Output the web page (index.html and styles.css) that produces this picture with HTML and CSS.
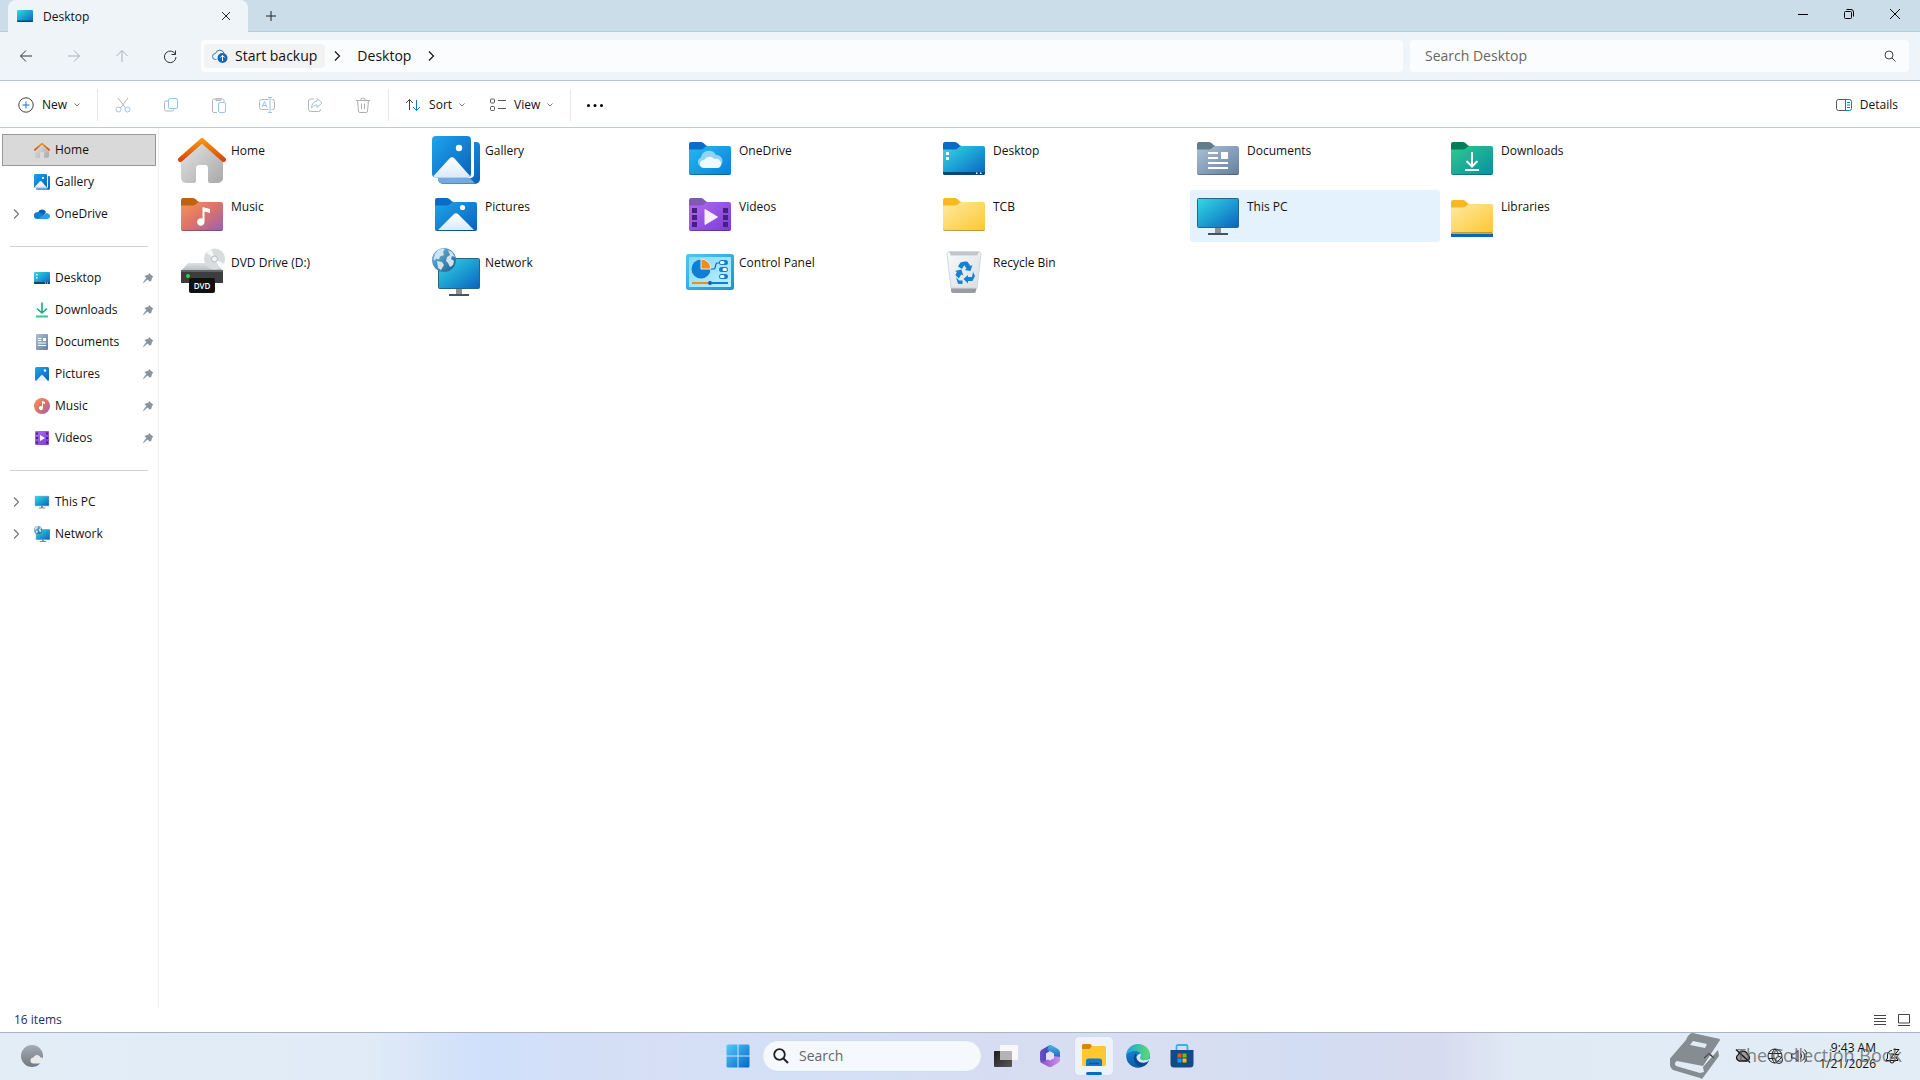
FILE: index.html
```
<!DOCTYPE html>
<html lang="en">

<head>
    <meta charset="UTF-8">
    <meta name="viewport" content="width=device-width, initial-scale=1.0">
    <title>Desktop</title>
    <link rel="stylesheet" href="styles.css">
</head>

<body>

    <svg class="sprite" aria-hidden="true">
        <defs>
            <linearGradient id="g-roof" x1="0" y1="0" x2="0" y2="1">
                <stop offset="0" stop-color="#f6920f"/><stop offset="1" stop-color="#d84a0c"/>
            </linearGradient>
            <linearGradient id="g-wall" x1="0" y1="0" x2="1" y2="1">
                <stop offset="0" stop-color="#e6e6e6"/><stop offset="1" stop-color="#a9a9a9"/>
            </linearGradient>
            <linearGradient id="g-blue" x1="0" y1="0" x2="1" y2="1">
                <stop offset="0" stop-color="#1fa5ea"/><stop offset="1" stop-color="#0a60bd"/>
            </linearGradient>
            <linearGradient id="g-sky" x1="0" y1="0" x2="1" y2="1">
                <stop offset="0" stop-color="#28b8ee"/><stop offset="1" stop-color="#0a80d8"/>
            </linearGradient>
            <linearGradient id="g-screen" x1="0" y1="0" x2="1" y2="1">
                <stop offset="0" stop-color="#37d8e4"/><stop offset="0.5" stop-color="#1c9fd3"/><stop offset="1" stop-color="#0b62bf"/>
            </linearGradient>
            <linearGradient id="g-doc" x1="0" y1="0" x2="1" y2="1">
                <stop offset="0" stop-color="#abc0d6"/><stop offset="1" stop-color="#647f9f"/>
            </linearGradient>
            <linearGradient id="g-green" x1="0" y1="0" x2="1" y2="1">
                <stop offset="0" stop-color="#2fca8c"/><stop offset="1" stop-color="#078fa5"/>
            </linearGradient>
            <linearGradient id="g-music" x1="0" y1="0" x2="1" y2="1">
                <stop offset="0" stop-color="#f79557"/><stop offset="0.5" stop-color="#dc7268"/><stop offset="1" stop-color="#9561b6"/>
            </linearGradient>
            <linearGradient id="g-video" x1="0" y1="0" x2="1" y2="1">
                <stop offset="0" stop-color="#b26af0"/><stop offset="1" stop-color="#7b3bd6"/>
            </linearGradient>
            <linearGradient id="g-yellow" x1="0" y1="0" x2="1" y2="1">
                <stop offset="0" stop-color="#ffeaa0"/><stop offset="1" stop-color="#fdc731"/>
            </linearGradient>
            <linearGradient id="g-snow" x1="0" y1="0" x2="0" y2="1">
                <stop offset="0" stop-color="#fff"/><stop offset="1" stop-color="#d9eaf9"/>
            </linearGradient>
            <linearGradient id="g-globe" x1="0" y1="0" x2="1" y2="1">
                <stop offset="0" stop-color="#6fbfe0"/><stop offset="1" stop-color="#1a5c8e"/>
            </linearGradient>
            <linearGradient id="g-panel" x1="0" y1="0" x2="1" y2="1">
                <stop offset="0" stop-color="#4fc9ee"/><stop offset="1" stop-color="#1e92d2"/>
            </linearGradient>
            <linearGradient id="g-panel-in" x1="0" y1="0" x2="1" y2="1">
                <stop offset="0" stop-color="#7fdcf8"/><stop offset="1" stop-color="#c3eefc"/>
            </linearGradient>
            <linearGradient id="g-bin" x1="0" y1="0" x2="1" y2="1">
                <stop offset="0" stop-color="#f9fafb"/><stop offset="1" stop-color="#dadde1"/>
            </linearGradient>
            <linearGradient id="g-edge-top" x1="0" y1="0" x2="1" y2="0">
                <stop offset="0" stop-color="#1aa7e0"/><stop offset="1" stop-color="#5bdd6c"/>
            </linearGradient>
            <linearGradient id="g-edge-side" x1="0" y1="0" x2="0" y2="1">
                <stop offset="0" stop-color="#1b93e0"/><stop offset="1" stop-color="#0b57a8"/>
            </linearGradient>
            <linearGradient id="g-moon" x1="0" y1="0" x2="0" y2="1">
                <stop offset="0" stop-color="#a3abb3"/><stop offset="1" stop-color="#727980"/>
            </linearGradient>
            <linearGradient id="g-drive" x1="0" y1="0" x2="0" y2="1">
                <stop offset="0" stop-color="#dfe1e3"/><stop offset="1" stop-color="#b6b9bc"/>
            </linearGradient>
            <linearGradient id="g-dark" x1="0" y1="0" x2="1" y2="1">
                <stop offset="0" stop-color="#1b1b1b"/><stop offset="1" stop-color="#5a5a5a"/>
            </linearGradient>
            <linearGradient id="g-start" x1="0" y1="0" x2="1" y2="1">
                <stop offset="0" stop-color="#54caf8"/><stop offset="1" stop-color="#0067c8"/>
            </linearGradient>
            <linearGradient id="g-office-a" x1="0" y1="0" x2="1" y2="0">
                <stop offset="0" stop-color="#6b4fc9"/><stop offset="1" stop-color="#3a3fa8"/>
            </linearGradient>
            <linearGradient id="g-office-b" x1="0" y1="0" x2="0" y2="1">
                <stop offset="0" stop-color="#46b5e8"/><stop offset="1" stop-color="#1d4fb0"/>
            </linearGradient>
            <linearGradient id="g-office-c" x1="0" y1="0" x2="1" y2="0">
                <stop offset="0" stop-color="#8b4fc4"/><stop offset="1" stop-color="#cf8df0"/>
            </linearGradient>
        </defs>

        <!-- large icons -->
        <symbol id="i-home" viewBox="0 0 48 48">
            <path d="M3 22 24 4l21 18v20a5 5 0 0 1-5 5h-8a2 2 0 0 1-2-2V32a3 3 0 0 0-3-3h-6a3 3 0 0 0-3 3v13a2 2 0 0 1-2 2H8a5 5 0 0 1-5-5z" fill="url(#g-wall)"/>
            <path d="M2.500 23.500 24 4.500l21.500 19" fill="none" stroke="url(#g-roof)" stroke-width="5" stroke-linecap="round" stroke-linejoin="round"/>
        </symbol>
        <symbol id="i-gallery" viewBox="0 0 48 48">
            <path d="M42 6h2a4 4 0 0 1 4 4v33a5 5 0 0 1-5 5H11a5 5 0 0 1-5-5v-1h32a4 4 0 0 0 4-4z" fill="url(#g-blue)"/>
            <path d="M6 42h32l5 5.500H10A5 5 0 0 1 6 43z" fill="#76a9dd"/>
            <rect width="39" height="41.500" rx="4" fill="url(#g-blue)"/>
            <path d="M1.500 40 17.500 22.500a3.500 3.500 0 0 1 5 0L38 40c-1 1-2 1.500-3 1.500H4c-1 0-2-.5-2.500-1.500z" fill="url(#g-snow)"/>
            <circle cx="27" cy="12" r="3.200" fill="#fff"/>
        </symbol>
        <symbol id="i-folder-tab" viewBox="0 0 48 48">
            <path d="M3 8a2 2 0 0 1 2-2h10c3 0 4 4 7 4l-5 5H3z"/>
        </symbol>
        <symbol id="i-folder-body" viewBox="0 0 48 48">
            <path d="M3 13.500h12c3 0 4-3.500 7-3.500h21a2 2 0 0 1 2 2v25a2 2 0 0 1-2 2H5a2 2 0 0 1-2-2z"/>
            <path d="M3 36.500A2 2 0 0 0 5 38h38a2 2 0 0 0 2-1.500v.5a2 2 0 0 1-2 2H5a2 2 0 0 1-2-2z" fill="#000" fill-opacity="0.25"/>
        </symbol>
        <symbol id="i-f-onedrive" viewBox="0 0 48 48">
            <use href="#i-folder-tab" fill="#0a6cc4"/><use href="#i-folder-body" fill="url(#g-sky)"/>
            <path d="M16 31a5 5 0 0 1-1-9.500 8 8 0 0 1 15-2.500 6 6 0 0 1 1 12z" fill="#8fd3f5"/>
            <path d="M18 32a4 4 0 0 1 0-8c2-3 7-5 10-1 4-1 7 1 7 5a4 4 0 0 1-4 4z" fill="#f1faff"/>
        </symbol>
        <symbol id="i-f-desktop" viewBox="0 0 48 48">
            <use href="#i-folder-tab" fill="#0a6cc4"/><use href="#i-folder-body" fill="url(#g-screen)"/>
            <path d="M3 36h42v1a2 2 0 0 1-2 2H5a2 2 0 0 1-2-2z" fill="#0d4676"/>
            <path d="M6 16h3v3H6zM6 21h3v3H6zM36 36.500h1.500V38H36zM40 36.500h1.500V38H40z" fill="#fff"/>
        </symbol>
        <symbol id="i-f-documents" viewBox="0 0 48 48">
            <use href="#i-folder-tab" fill="#617d8c"/><use href="#i-folder-body" fill="url(#g-doc)"/>
            <path d="M14 16h10v2H14zM14 21h10v2H14zM27 16h7v7h-7zM14 26h20v2H14zM14 31h20v2H14z" fill="#fff"/>
        </symbol>
        <symbol id="i-f-downloads" viewBox="0 0 48 48">
            <use href="#i-folder-tab" fill="#067d5a"/><use href="#i-folder-body" fill="url(#g-green)"/>
            <path d="M24 16v14M18.500 25l5.500 5.500 5.500-5.500M17 34h14" fill="none" stroke="#fff" stroke-width="2"/>
        </symbol>
        <symbol id="i-f-music" viewBox="0 0 48 48">
            <use href="#i-folder-tab" fill="#bf620f"/><use href="#i-folder-body" fill="url(#g-music)"/>
            <path d="M24.500 15 32 17v4l-5.500-1.500V30a3.700 3.700 0 1 1-2-3.300z" fill="#fff"/>
        </symbol>
        <symbol id="i-f-pictures" viewBox="0 0 48 48">
            <use href="#i-folder-tab" fill="#0a6cc4"/><use href="#i-folder-body" fill="url(#g-blue)"/>
            <path d="m6 38 15.500-15.500a3.500 3.500 0 0 1 5 0L42 38z" fill="url(#g-snow)"/>
            <circle cx="30.500" cy="15.500" r="2.600" fill="#fff"/>
        </symbol>
        <symbol id="i-f-videos" viewBox="0 0 48 48">
            <use href="#i-folder-tab" fill="#8059b4"/><use href="#i-folder-body" fill="url(#g-video)"/>
            <path d="M6 16h5v5H6zM6 23h5v5H6zM6 30h5v5H6zM37 16h5v5h-5zM37 23h5v5h-5zM37 30h5v5h-5z" fill="#44217c"/>
            <path d="M19 17.500 31.500 25 19 32.500z" fill="#f6effd" stroke="#f6effd" stroke-linejoin="round"/>
        </symbol>
        <symbol id="i-f-plain" viewBox="0 0 48 48">
            <use href="#i-folder-tab" fill="#f9b81f"/><use href="#i-folder-body" fill="url(#g-yellow)"/>
        </symbol>
        <symbol id="i-f-libraries" viewBox="0 0 48 48">
            <path d="M3 41h42v4H3z" fill="#0b66b4"/>
            <path d="M4 40h40l1 2H3z" fill="#78bcd2"/>
            <use href="#i-f-plain" y="2"/>
        </symbol>
        <symbol id="i-pc" viewBox="0 0 48 48">
            <path d="M21 36h6v5h-6z" fill="#8c9298"/>
            <path d="M14 41h20v2H14z" fill="#4a5157"/>
            <rect x="3.500" y="6.500" width="41" height="29" rx="1" fill="url(#g-screen)" stroke="#2b6480"/>
        </symbol>
        <symbol id="i-network" viewBox="0 0 48 48">
            <path d="M24 41h6v5h-6z" fill="#8c9298"/>
            <path d="M17 46h20v2H17z" fill="#4a5157"/>
            <rect x="6.500" y="10.500" width="41" height="30" rx="1" fill="url(#g-screen)" stroke="#2b6480"/>
            <circle cx="12" cy="12" r="12" fill="url(#g-globe)"/>
            <path d="m6 2 4-1.500 3 .5-2 3 1 3-4 1.500-1 3-3-1-1 2-1.500-1L3 6zM16 2l4 2 3 5-3-1-1 3 3 2-1 4-3 2-2-4-2-2 1-4 3-2zM5 13l5 1 2 3-3 5-3-2z" fill="#cfe4ee"/>
        </symbol>
        <symbol id="i-control" viewBox="0 0 48 48">
            <rect y="6" width="48" height="36" rx="2.500" fill="url(#g-panel)"/>
            <rect x="3" y="9" width="42" height="30" rx="1" fill="url(#g-panel-in)"/>
            <circle cx="15" cy="21" r="9.500" fill="#0f7fd6"/>
            <path d="M15 21V11a10 10 0 0 1 10 10z" fill="#f38c14" stroke="#d6f4fd"/>
            <path d="M25 21h3c2 0 1-6 3-6h3" fill="none" stroke="#0e5fae" stroke-width="1.200"/>
            <path d="M35.500 14.500h4M35.500 21.500h4M35.500 28.500h4" stroke="#0f7fd6" stroke-width="5" stroke-linecap="round"/>
            <path d="M35.500 14.500h1.500M38 21.500h1.500M35.500 28.500h1.500" stroke="#fff" stroke-width="3" stroke-linecap="round"/>
            <path d="M6 35h16" stroke="#f38c14" stroke-width="2"/><path d="M26 35h16" stroke="#0f7fd6" stroke-width="2"/>
            <circle cx="24" cy="35" r="2" fill="#0b5aa8"/>
        </symbol>
        <symbol id="i-bin" viewBox="0 0 48 48">
            <path d="M11 38h26l-1 5a2 2 0 0 1-2 2H13a2 2 0 0 1-2-2z" fill="#999da2"/>
            <path d="M9.500 3.500h29a2.500 2.500 0 0 1 2.500 3L37 40H11L7 6.500a2.500 2.500 0 0 1 2.500-3z" fill="url(#g-bin)" stroke="#d3d7db"/>
            <path d="M9 4h30l-2 3.500H11z" fill="#c3c7cc"/>
            <path d="m20.500 14.500 4-1 3 .2 3 4.300 2-1-2 6-6-1 2-1.300-2.300-3.500-2.200 3.700-4-2.300zM15 23l6.500-1.500 1.700 6-2-1-2.300 4-3.500-3.500 1.500-3zM33 24l2 4-2.500 5h-4.500v2.500L23.500 31l4.500-4v2h4zM16 29l3 3.500h3.500v3.500l-4.500-.3z" fill="#1283d4"/>
        </symbol>

        <!-- small sidebar icons -->
        <symbol id="s-onedrive" viewBox="0 0 16 16">
            <path d="M4 6.500A4.300 4.300 0 0 1 12 6l-3 4-5 3z" fill="#0a5fb0"/>
            <path d="M3.500 13A3.300 3.300 0 0 1 3 6.300c2-.7 4 .2 5 1.200l4 5z" fill="#127fd2"/>
            <path d="M4 13 12 7c2.500 0 4 1.500 4 3.300S14.500 13 13 13z" fill="#2ba0ea"/>
        </symbol>
        <symbol id="s-desktop" viewBox="0 0 16 16">
            <rect y="2" width="16" height="12" rx="1" fill="url(#g-screen)"/>
            <path d="M0 12h16v1a1 1 0 0 1-1 1H1a1 1 0 0 1-1-1z" fill="#0d4676"/>
            <path d="M2 4h1.500v1.500H2zM2 7h1.500v1.500H2zM11 12.500h1v1h-1zM13 12.500h1v1h-1z" fill="#fff"/>
        </symbol>
        <symbol id="s-downloads" viewBox="0 0 16 16">
            <path d="M8 .5v10M3 6.500l5 4.500 5-4.500" fill="none" stroke="#1ba884" stroke-width="1.600"/>
            <path d="M2 14.500h12" stroke="#37c795" stroke-width="2"/>
        </symbol>
        <symbol id="s-documents" viewBox="0 0 16 16">
            <rect x="2" width="12" height="16" rx="1" fill="url(#g-doc)"/>
            <path d="M4 4h3.500v1H4zM4 6h3.500v1H4zM9 4h3v3H9zM4 8.500h8v1H4zM4 11h8v1H4z" fill="#fff"/>
        </symbol>
        <symbol id="s-pictures" viewBox="0 0 16 16">
            <rect x="1" y="1" width="14" height="14" rx="1.500" fill="url(#g-blue)"/>
            <path d="m2 15 5-5.500a1.300 1.300 0 0 1 2 0l5 5.500z" fill="#e8f3fc"/>
            <circle cx="11" cy="4.500" r="1.200" fill="#fff"/>
        </symbol>
        <symbol id="s-music" viewBox="0 0 16 16">
            <circle cx="8" cy="8" r="8" fill="url(#g-music)"/>
            <path d="m8 3 3 1v2L9 5.300V10a2 2 0 1 1-1-1.700z" fill="#fff"/>
        </symbol>
        <symbol id="s-videos" viewBox="0 0 16 16">
            <rect x="1" y="1" width="14" height="14" rx="1" fill="url(#g-video)"/>
            <path d="M2 2.500h2v2H2zM2 7h2v2H2zM2 11.500h2v2H2zM12 2.500h2v2h-2zM12 7h2v2h-2zM12 11.500h2v2h-2z" fill="#44217c"/>
            <path d="M6 5v6l5-3z" fill="#fff"/>
        </symbol>
        <symbol id="s-pin" viewBox="0 0 12 12">
            <path d="m7 1 4.500 4-1.500.8-.7 3-1.300.9-2.500-2.200-4 3.500-.5-.5L4.300 6 2.500 4 4 3.300l2.500-.5z" fill="#8a949c"/>
        </symbol>
        <symbol id="s-right" viewBox="0 0 12 12">
            <path d="m4 1.500 4.500 4.500L4 10.500" fill="none" stroke="currentColor" stroke-width="1.200"/>
        </symbol>
        <symbol id="s-down" viewBox="0 0 8 8">
            <path d="M1.500 2.500 4 5l2.500-2.500" fill="none" stroke="#777"/>
        </symbol>
    </svg>

    <header class="titlebar">
        <div class="tab">
            <svg class="icon-16" viewBox="0 0 16 16"><rect y="2" width="16" height="12" rx="1" fill="url(#g-screen)"/><path d="M0 12.500h16v.5a1 1 0 0 1-1 1H1a1 1 0 0 1-1-1z" fill="#0d4676"/></svg>
            <span class="tab-title">Desktop</span>
            <button class="tab-close" aria-label="Close tab"><svg class="icon-12" viewBox="0 0 12 12"><path d="m2 2 8 8M10 2l-8 8" fill="none" stroke="#222"/></svg></button>
        </div>
        <button class="tab-add" aria-label="New tab"><svg class="icon-12" viewBox="0 0 12 12"><path d="M6 1v10M1 6h10" fill="none" stroke="#222"/></svg></button>
        <div class="window-buttons">
            <button aria-label="Minimize"><svg class="icon-12" viewBox="0 0 12 12"><path d="M1 6.500h10" stroke="#000"/></svg></button>
            <button aria-label="Restore"><svg class="icon-12" viewBox="0 0 12 12"><path d="M1.500 4.500a1 1 0 0 1 1-1h5a1 1 0 0 1 1 1v5a1 1 0 0 1-1 1h-5a1 1 0 0 1-1-1zM3.500 1.500H8A2.500 2.500 0 0 1 10.500 4v4.500" fill="none" stroke="#000"/></svg></button>
            <button aria-label="Close"><svg class="icon-12" viewBox="0 0 12 12"><path d="m1 1 10 10M11 1 1 11" stroke="#000"/></svg></button>
        </div>
    </header>

    <div class="navbar">
        <div class="nav-buttons">
            <button aria-label="Back"><svg class="icon-16" viewBox="0 0 16 16"><path d="M14 8H2.500M8 2.500 2.500 8 8 13.500" fill="none" stroke="#333"/></svg></button>
            <button aria-label="Forward" disabled><svg class="icon-16" viewBox="0 0 16 16"><path d="M2 8h11.500M8 2.500l5.500 5.500L8 13.500" fill="none" stroke="#aab0b6"/></svg></button>
            <button aria-label="Up" disabled><svg class="icon-16" viewBox="0 0 16 16"><path d="M8 14V2.500M2.500 8 8 2.500 13.500 8" fill="none" stroke="#aab0b6"/></svg></button>
            <button aria-label="Refresh"><svg class="icon-16" viewBox="0 0 16 16"><path d="M13.500 6.500A5.800 5.800 0 1 0 14 9M13.500 2.500v4h-4" fill="none" stroke="#333"/></svg></button>
        </div>
        <nav class="address" aria-label="Address">
            <button class="crumb crumb-backup">
                <svg class="icon-16" viewBox="0 0 16 16"><path d="M4.500 11.500H3.500a3 3 0 0 1 0-6A4.500 4.500 0 0 1 12 5" fill="none" stroke="#2a78c2"/><circle cx="10.500" cy="10" r="5" fill="#1767b8"/><path d="M10.500 13V7.500M8.300 9.500l2.200-2.200 2.200 2.200" fill="none" stroke="#fff"/></svg>
                Start backup
            </button>
            <svg class="icon-12"><use href="#s-right"/></svg>
            <button class="crumb">Desktop</button>
            <svg class="icon-12"><use href="#s-right"/></svg>
        </nav>
        <div class="search">
            <input type="text" placeholder="Search Desktop" aria-label="Search Desktop">
            <svg class="icon-12" viewBox="0 0 12 12"><circle cx="5" cy="5" r="4" fill="none" stroke="#444"/><path d="m8 8 3.500 3.500" stroke="#444"/></svg>
        </div>
    </div>

    <div class="toolbar">
        <button class="tool">
            <svg class="icon-16" viewBox="0 0 16 16"><circle cx="8" cy="8" r="7.200" fill="none" stroke="#444"/><path d="M8 4.500v7M4.500 8h7" stroke="#1976c5"/></svg>
            New
            <svg class="icon-8"><use href="#s-down"/></svg>
        </button>
        <div class="tool-icons">
            <button aria-label="Cut" disabled><svg class="icon-16" viewBox="0 0 16 16"><path d="m3 1 7.500 10M13 1 5.500 11" fill="none" stroke="#b5b5b5"/><circle cx="3.500" cy="12.500" r="2.500" fill="none" stroke="#9cc4ea"/><circle cx="12.500" cy="12.500" r="2.500" fill="none" stroke="#9cc4ea"/></svg></button>
            <button aria-label="Copy" disabled><svg class="icon-16" viewBox="0 0 16 16"><rect x="5.500" y="1.500" width="9" height="10" rx="1.500" fill="none" stroke="#9cc4ea"/><path d="M5.500 4H3a1.500 1.500 0 0 0-1.500 1.500v7A1.500 1.500 0 0 0 3 14h6a1.500 1.500 0 0 0 1.500-1.500v-1" fill="none" stroke="#b5b5b5"/></svg></button>
            <button aria-label="Paste" disabled><svg class="icon-16" viewBox="0 0 16 16"><path d="M6 15.500H3A1.500 1.500 0 0 1 1.500 14V3.500A1.500 1.500 0 0 1 3 2h8.500A1.500 1.500 0 0 1 13 3.500V5M5 3.500v-2h5v2z" fill="none" stroke="#b5b5b5"/><rect x="7.500" y="5.500" width="7" height="10" rx="1.500" fill="#fff" stroke="#9cc4ea"/></svg></button>
            <button aria-label="Rename" disabled><svg class="icon-16" viewBox="0 0 16 16"><path d="M9.500 2.500H2.500a2 2 0 0 0-2 2v6a2 2 0 0 0 2 2h7M12.500 2.500h1a2 2 0 0 1 2 2v6a2 2 0 0 1-2 2h-1" fill="none" stroke="#b5b5b5"/><path d="M9 .5h4M9 15.500h4M11 .5v15M3 10.500l2.500-6 2.500 6M4 8.500h3" fill="none" stroke="#9cc4ea"/></svg></button>
            <button aria-label="Share" disabled><svg class="icon-16" viewBox="0 0 16 16"><path d="M7 2H3.500a2 2 0 0 0-2 2v8.500a2 2 0 0 0 2 2h8a2 2 0 0 0 2-2V12" fill="none" stroke="#b5b5b5"/><path d="m10 1.500 5 4.500-5 4.500V8C7.500 8 6 9 4.500 11 4.500 7 7 4.500 10 4z" fill="none" stroke="#9cc4ea"/></svg></button>
            <button aria-label="Delete" disabled><svg class="icon-16" viewBox="0 0 16 16"><path d="M1 3.500h14M5.500 3.500a2.500 2.500 0 0 1 5 0M2.500 3.500l1 10.500a1.500 1.500 0 0 0 1.500 1.500h6a1.500 1.500 0 0 0 1.500-1.500l1-10.500M6.500 6.500v5.500M9.500 6.500v5.500" fill="none" stroke="#b0b0b0"/></svg></button>
        </div>
        <button class="tool">
            <svg class="icon-16" viewBox="0 0 16 16"><path d="M4.500 13V2.500M1 6l3.500-3.500L8 6" fill="none" stroke="#444"/><path d="M11.500 3v10.500M8 10l3.500 3.500L15 10" fill="none" stroke="#1976c5"/></svg>
            Sort
            <svg class="icon-8"><use href="#s-down"/></svg>
        </button>
        <button class="tool">
            <svg class="icon-16" viewBox="0 0 16 16"><path d="M.5 3a1 1 0 0 1 1-1h2a1 1 0 0 1 1 1v2a1 1 0 0 1-1 1h-2a1 1 0 0 1-1-1zM.5 10.500a1 1 0 0 1 1-1h2a1 1 0 0 1 1 1v2a1 1 0 0 1-1 1h-2a1 1 0 0 1-1-1zM8 3.500h8M8 11.500h8" fill="none" stroke="#555"/></svg>
            View
            <svg class="icon-8"><use href="#s-down"/></svg>
        </button>
        <button class="tool tool-more" aria-label="See more"><svg class="icon-16" viewBox="0 0 16 16"><circle cx="1.500" cy="8.500" r="1.500"/><circle cx="8" cy="8.500" r="1.500"/><circle cx="14.500" cy="8.500" r="1.500"/></svg></button>
        <button class="tool tool-details">
            <svg class="icon-16" viewBox="0 0 16 16"><path d="M10 2.500H2.500a2 2 0 0 0-2 2v7a2 2 0 0 0 2 2H10" fill="none" stroke="#555"/><path d="M9.500 2.500h4a2 2 0 0 1 2 2v7a2 2 0 0 1-2 2h-4zM11 5.500h3M11 8h3M11 10.500h3" fill="none" stroke="#1976c5"/></svg>
            Details
        </button>
    </div>

    <main class="main">
        <nav class="sidebar" aria-label="Folders">
            <a class="side-item active" href="#"><svg class="icon-16"><use href="#i-home"/></svg>Home</a>
            <a class="side-item" href="#"><svg class="icon-16"><use href="#i-gallery"/></svg>Gallery</a>
            <a class="side-item has-arrow" href="#"><svg class="icon-12 arrow"><use href="#s-right"/></svg><svg class="icon-16"><use href="#s-onedrive"/></svg>OneDrive</a>
            <hr>
            <a class="side-item" href="#"><svg class="icon-16"><use href="#s-desktop"/></svg>Desktop<svg class="icon-12 pin"><use href="#s-pin"/></svg></a>
            <a class="side-item" href="#"><svg class="icon-16"><use href="#s-downloads"/></svg>Downloads<svg class="icon-12 pin"><use href="#s-pin"/></svg></a>
            <a class="side-item" href="#"><svg class="icon-16"><use href="#s-documents"/></svg>Documents<svg class="icon-12 pin"><use href="#s-pin"/></svg></a>
            <a class="side-item" href="#"><svg class="icon-16"><use href="#s-pictures"/></svg>Pictures<svg class="icon-12 pin"><use href="#s-pin"/></svg></a>
            <a class="side-item" href="#"><svg class="icon-16"><use href="#s-music"/></svg>Music<svg class="icon-12 pin"><use href="#s-pin"/></svg></a>
            <a class="side-item" href="#"><svg class="icon-16"><use href="#s-videos"/></svg>Videos<svg class="icon-12 pin"><use href="#s-pin"/></svg></a>
            <hr>
            <a class="side-item has-arrow" href="#"><svg class="icon-12 arrow"><use href="#s-right"/></svg><svg class="icon-16"><use href="#i-pc"/></svg>This PC</a>
            <a class="side-item has-arrow" href="#"><svg class="icon-12 arrow"><use href="#s-right"/></svg><svg class="icon-16"><use href="#i-network"/></svg>Network</a>
        </nav>

        <div class="files">
            <a class="file" href="#"><svg class="icon-48"><use href="#i-home"/></svg><span>Home</span></a>
            <a class="file" href="#"><svg class="icon-48"><use href="#i-gallery"/></svg><span>Gallery</span></a>
            <a class="file" href="#"><svg class="icon-48"><use href="#i-f-onedrive"/></svg><span>OneDrive</span></a>
            <a class="file" href="#"><svg class="icon-48"><use href="#i-f-desktop"/></svg><span>Desktop</span></a>
            <a class="file" href="#"><svg class="icon-48"><use href="#i-f-documents"/></svg><span>Documents</span></a>
            <a class="file" href="#"><svg class="icon-48"><use href="#i-f-downloads"/></svg><span>Downloads</span></a>
            <a class="file" href="#"><svg class="icon-48"><use href="#i-f-music"/></svg><span>Music</span></a>
            <a class="file" href="#"><svg class="icon-48"><use href="#i-f-pictures"/></svg><span>Pictures</span></a>
            <a class="file" href="#"><svg class="icon-48"><use href="#i-f-videos"/></svg><span>Videos</span></a>
            <a class="file" href="#"><svg class="icon-48"><use href="#i-f-plain"/></svg><span>TCB</span></a>
            <a class="file hovered" href="#"><svg class="icon-48"><use href="#i-pc"/></svg><span>This PC</span></a>
            <a class="file" href="#"><svg class="icon-48"><use href="#i-f-libraries"/></svg><span>Libraries</span></a>
            <a class="file" href="#">
                <svg class="icon-48" viewBox="0 0 48 48">
                    <path d="m10 15-7 8h42l-7-8z" fill="url(#g-drive)"/>
                    <circle cx="36.500" cy="11" r="10.500" fill="#d9dcdc"/>
                    <path d="m36.500 11-8-6.500a10 10 0 0 1 5-3.500zM36.500 11l9.500 4.500a10 10 0 0 1-4 4.500z" fill="#f6f8f7"/>
                    <circle cx="36.500" cy="11" r="3" fill="#f4f4f4" stroke="#b9bcbc"/>
                    <path d="M3 22h42v13H3z" fill="#3b3d3f"/>
                    <path d="M3 22h42v2H3z" fill="#616466"/>
                    <circle cx="10" cy="28" r="2" fill="#37d046"/>
                    <rect x="11" y="30" width="26" height="15" rx="2" fill="#111"/>
                    <text class="dvd-text" x="24" y="41" text-anchor="middle" fill="#fff">DVD</text>
                </svg>
                <span>DVD Drive (D:)</span>
            </a>
            <a class="file" href="#"><svg class="icon-48"><use href="#i-network"/></svg><span>Network</span></a>
            <a class="file" href="#"><svg class="icon-48"><use href="#i-control"/></svg><span>Control Panel</span></a>
            <a class="file" href="#"><svg class="icon-48"><use href="#i-bin"/></svg><span>Recycle Bin</span></a>
        </div>
    </main>

    <div class="statusbar">
        <span>16 items</span>
        <div class="view-buttons">
            <button aria-label="Details view"><svg class="icon-12" viewBox="0 0 12 12"><path d="M0 1.500h12M0 4.500h12M0 7.500h12M0 10.500h12" stroke="#444"/></svg></button>
            <button aria-label="Large icons view"><svg class="icon-12" viewBox="0 0 12 12"><path d="M.5.500h11v8.500H.5zM0 11.500h12" fill="none" stroke="#444"/></svg></button>
        </div>
    </div>

    <footer class="taskbar">
        <button class="weather" aria-label="Weather">
            <svg class="icon-24" viewBox="0 0 24 24"><circle cx="12" cy="12" r="11" fill="url(#g-moon)"/><path d="M13.500 19.500a3 3 0 0 1 0-6c1-3.500 6-3.500 7 0a3 3 0 0 1 .5 6z" fill="#e8eaec"/></svg>
        </button>
        <div class="apps">
            <button class="app" aria-label="Start"><svg class="icon-24" viewBox="0 0 24 24"><path d="M.5 2a1.500 1.500 0 0 1 1.500-1.500h9.500v11H.5zM12.500.500H22A1.500 1.500 0 0 1 23.500 2v9.500h-11zM.5 12.500h11v11H2A1.500 1.500 0 0 1 .5 22zM12.500 12.500h11V22a1.500 1.500 0 0 1-1.500 1.500h-9.500z" fill="url(#g-start)"/></svg></button>
            <div class="task-search">
                <svg class="icon-16" viewBox="0 0 16 16"><circle cx="6.500" cy="6.500" r="5.300" fill="none" stroke="#222" stroke-width="1.800"/><path d="m10.500 10.500 4.500 4.500" stroke="#222" stroke-width="2"/></svg>
                <input type="text" placeholder="Search" aria-label="Search">
            </div>
            <button class="app" aria-label="Task view"><svg class="icon-24" viewBox="0 0 24 24"><rect x="6" y="1" width="18" height="15" rx="1" fill="#f8f8f8"/><rect y="7" width="18" height="16" rx="1" fill="url(#g-dark)"/><path d="M6 7h12v9H6z" fill="#b4b4b4"/></svg></button>
            <button class="app" aria-label="Microsoft 365"><svg class="icon-24" viewBox="0 0 24 24"><path d="M12 1 4 5.500a3.500 3.500 0 0 0-2 3v7c0 2 2 3.500 4 2.500l2-1V9.500L15 5z" fill="url(#g-office-a)"/><path d="m11 1.500c1-.7 2-.7 3 0l6 3.500a4 4 0 0 1 2 3.500v8L16 17V9.500L9 6z" fill="url(#g-office-b)"/><path d="M22 13v3a3.500 3.500 0 0 1-2 3l-6 3.500a4 4 0 0 1-4 0L3.500 19c-1-.6-1.500-1.500-1.500-2.500 1 1.500 3 1.500 4.500.7L16 12z" fill="url(#g-office-c)"/><path d="m12 7.500 4 2.200v4.600l-4 2.200-4-2.200V9.700z" fill="#dfe3f5"/></svg></button>
            <button class="app app-active" aria-label="File Explorer"><svg class="icon-24" viewBox="0 0 24 24"><path d="M0 1.500A1.500 1.500 0 0 1 1.500 0h7l2 3-3 4H0z" fill="#cf8b07"/><path d="M0 5h7.500L10 2h12.500A1.500 1.500 0 0 1 24 3.500v17a1.500 1.500 0 0 1-1.500 1.500h-21A1.500 1.500 0 0 1 0 20.500z" fill="#fdc932"/><path d="M4 22v-5a2.500 2.500 0 0 1 2.500-2.500h11A2.500 2.500 0 0 1 20 17v5z" fill="#1579c6"/><path d="M7 19.500h10" stroke="#0b5597" stroke-width="1.500"/></svg></button>
            <button class="app" aria-label="Edge"><svg class="icon-24" viewBox="0 0 24 24"><circle cx="12" cy="12" r="11.800" fill="url(#g-edge-side)"/><path d="M.3 11C1 4.500 6 .2 12 .2c7 0 12 5 11.800 10.500 0 4-3.500 5.500-6.500 5.500-3 0-4-1.500-3-3C16 9.500 13 7 9.500 7 5 7 1.500 9 .3 11z" fill="url(#g-edge-top)"/><path d="M9.500 9.500C6.500 12 7 20 14 22.500c3 .5 6.500-1.500 8-4-6 2.500-12-1-11.500-6 0-1.500.5-2.500-1-3z" fill="#0a4a92"/><path d="M14.300 13c.7-1 1-2 .2-3.500 0 0-3.500 1-4 3.500 0 2 1.500 5 5 5.500 3 .5 6-.3 7.500-2.500l.5-2c-1.500 1.700-3.500 2.200-6 2.200-2.500-.2-4-1.200-3.200-3.200z" fill="#dbe3f3"/></svg></button>
            <button class="app" aria-label="Store"><svg class="icon-24" viewBox="0 0 24 24"><path d="M6.500 6V2.500A1.500 1.500 0 0 1 8 1h8a1.500 1.500 0 0 1 1.500 1.500V6" fill="none" stroke="#35b2ee" stroke-width="1.800"/><path d="M.5 6h23v14a3.500 3.500 0 0 1-3.500 3.500H4A3.500 3.500 0 0 1 .5 20z" fill="#134a86"/><path d="M7.500 9.500h4v4h-4z" fill="#f25022"/><path d="M12.500 9.500h4v4h-4z" fill="#7fba00"/><path d="M7.500 14.500h4v4h-4z" fill="#00a4ef"/><path d="M12.500 14.500h4v4h-4z" fill="#ffb900"/></svg></button>
        </div>
        <div class="tray">
            <button class="tray-more" aria-label="Hidden icons"><svg class="icon-12" viewBox="0 0 12 12"><path d="m1 8 5-4.500L11 8" fill="none" stroke="#222" stroke-width="1.200"/></svg></button>
            <svg class="icon-16 tray-cloud" viewBox="0 0 16 16"><path d="M4 13a3.500 3.500 0 0 1-.5-6.500 4.700 4.700 0 0 1 9 0A3.500 3.500 0 0 1 12 13z" fill="#999" stroke="#111" stroke-width="1.300"/><path d="m1 1.500 14 13" stroke="#111" stroke-width="1.300"/></svg>
            <button class="tray-net" aria-label="Network and volume">
                <svg class="icon-16" viewBox="0 0 16 16"><circle cx="8" cy="8" r="7" fill="none" stroke="#222"/><path d="M1.500 5.500h13M1.500 10.500H8M8 1C4 4 4 12 8 15M8 1c2.500 2 3.500 4.500 3 7" fill="none" stroke="#222"/><circle cx="12" cy="12" r="3.500" fill="#e1ebf6" stroke="#222"/><path d="m9.500 14.500 5-5" stroke="#222"/></svg>
                <svg class="icon-16" viewBox="0 0 16 16"><path d="M.5 6h3L7 2.500v11L3.500 10h-3zM9.500 5.500a3.500 3.500 0 0 1 0 5M11.500 3.500a6 6 0 0 1 0 9M13.500 1.500a9 9 0 0 1 0 13" fill="none" stroke="#222"/></svg>
            </button>
            <div class="clock"><span>9:43 AM</span><span>1/21/2026</span></div>
            <svg class="icon-16" viewBox="0 0 16 16"><path d="M8 2.500A4.500 4.500 0 0 0 3.500 7v3L2 12.500h12L12.500 10V9M6 13a2 2 0 0 0 4 0M9.500 1.500H15l-4 5h4M7 6h3l-3 4h3" fill="none" stroke="#111"/></svg>
        </div>
        <div class="watermark">
            <svg class="book" viewBox="0 0 50 46"><path d="M22 0 50 6 33 32 4 26z" fill="#5f6468"/><path d="M22 0C19 1 17 4 16 7L0 25.500C-1 31 0 35 3 37l27 8 2 1 17-23-1-6-15 17 1 5-4 1L6 33c-2-2-1-4 1-5l26 5L50 7z" fill="#5f6468"/><path d="m23 8 14 3-2 4-15-3z" fill="#e3edf6"/></svg>
            <span>The Collection Book</span>
        </div>
    </footer>

</body>

</html>
```
FILE: styles.css
```
* {
    box-sizing: border-box;
}

body {
    margin: 0;
    height: 100vh;
    display: flex;
    flex-direction: column;
    overflow: hidden;
    background: #fff;
    color: #111;
    font-family: "Open Sans", "Noto Sans", sans-serif;
    font-size: 12px;
    line-height: 16px;
}

button {
    display: flex;
    align-items: center;
    justify-content: center;
    padding: 0;
    border: 0;
    background: none;
    color: inherit;
    font: inherit;
}

input {
    flex: 1;
    min-width: 0;
    padding: 0;
    border: 0;
    outline: 0;
    background: none;
    color: #222;
    font: inherit;
}

input::placeholder {
    color: #666;
    opacity: 1;
}

a {
    color: inherit;
    text-decoration: none;
}

svg {
    flex: none;
    display: block;
}

.sprite {
    position: absolute;
    width: 0;
    height: 0;
}

.icon-8 {
    width: 8px;
    height: 8px;
}

.icon-12 {
    width: 12px;
    height: 12px;
}

.icon-16 {
    width: 16px;
    height: 16px;
}

.icon-24 {
    width: 24px;
    height: 24px;
}

.icon-48 {
    width: 48px;
    height: 48px;
}

.dvd-text {
    font-size: 8px;
    font-weight: 600;
}

/* title bar */
.titlebar {
    display: flex;
    height: 32px;
    padding: 0 2px 0 8px;
    background: #cbdde9;
    box-shadow: inset 0 -1px #b3cbdd;
}

.tab {
    display: flex;
    align-items: center;
    gap: 10px;
    width: 240px;
    padding: 0 16px 0 9px;
    border-radius: 8px 8px 0 0;
    background: #eff4f9;
}

.tab-title {
    flex: 1;
    padding-top: 2px;
}

.tab-add {
    width: 46px;
}

.window-buttons {
    display: flex;
    margin-left: auto;
    padding-bottom: 4px;
}

.window-buttons button {
    width: 46px;
}

/* navigation */
.navbar {
    display: flex;
    gap: 7px;
    height: 49px;
    padding: 8px 11px 8px 2px;
    border-bottom: 1px solid #b7c6d8;
    background: #eff4f8;
    font-size: 14px;
}

.nav-buttons {
    display: flex;
}

.nav-buttons button {
    width: 48px;
}

.address,
.search {
    display: flex;
    align-items: center;
    border-radius: 4px;
    background: #fbfcfe;
}

.address {
    flex: 28;
    gap: 6px;
    padding-left: 3px;
}

.crumb {
    height: 24px;
    padding: 0 8px;
    border-radius: 4px;
}

.crumb-backup {
    gap: 7px;
    background: #f3f3f4;
}

.search {
    flex: 11;
    padding: 0 13px 0 15px;
}

/* toolbar */
.toolbar {
    display: flex;
    align-items: center;
    height: 47px;
    padding: 2px 14px 0 10px;
    border-bottom: 1px solid #b9cbd6;
}

.tool {
    gap: 8px;
    height: 32px;
    padding: 0 8px;
    margin-right: 8px;
}

.tool .icon-8 {
    margin-left: -2px;
}

.tool-icons {
    display: flex;
    height: 32px;
    margin-right: 8px;
    padding: 0 1px;
    border: 1px solid #e5e9ec;
    border-width: 0 1px;
}

.tool-icons button {
    width: 48px;
}

.tool-more {
    padding: 0 16px;
    border-left: 1px solid #e5e9ec;
    margin-right: auto;
}

.tool-details {
    margin-right: 0;
}

/* main area */
.main {
    flex: 1;
    display: flex;
    min-height: 0;
}

.sidebar {
    width: 159px;
    padding: 6px 2px 0;
    border-right: 1px solid #f0f0f0;
}

.side-item {
    display: flex;
    align-items: center;
    gap: 5px;
    height: 32px;
    padding: 0 1px 0 31px;
    border: 1px solid transparent;
}

.side-item.active {
    border-color: #999;
    background: #d9d9d9;
}

.side-item.has-arrow {
    padding-left: 7px;
}

.arrow {
    margin-right: 7px;
    color: #777;
}

.pin {
    margin-left: auto;
}

.sidebar hr {
    height: 1px;
    margin: 16px 8px 15px;
    border: 0;
    background: #d0d0d0;
}

.files {
    flex: 1;
    display: grid;
    grid-template-columns: repeat(auto-fill, 250px);
    grid-auto-rows: 52px;
    gap: 4px;
    align-content: start;
    padding: 6px 0 0 15px;
}

.file {
    display: flex;
    gap: 5px;
    padding: 2px 4px;
    border-radius: 3px;
}

.file span {
    padding-top: 7px;
}

.file.hovered {
    background: #e4f2fd;
}

.statusbar {
    display: flex;
    align-items: center;
    justify-content: space-between;
    height: 24px;
    padding: 0 10px 0 14px;
    color: #1e2f5c;
}

.view-buttons {
    display: flex;
    gap: 12px;
}

/* taskbar */
.taskbar {
    position: relative;
    display: grid;
    grid-template-columns: 1fr auto 1fr;
    align-items: center;
    height: 48px;
    padding-bottom: 2px;
    border-top: 1px solid #aab4c2;
    background: linear-gradient(90deg, #e3edf6 0%, #e1ebf7 19%, #d0e0fa 25%, #d5def4 34%, #d4e0f6 42%, #d6ddf2 52%, #d9dff2 60%, #d2dcf2 68%, #d7dbef 75%, #e0eaf5 79%, #e2edf6 100%);
}

.weather {
    width: 64px;
}

.apps {
    display: flex;
    align-items: center;
}

.app {
    width: 44px;
    height: 38px;
}

.app-active {
    position: relative;
    width: 38px;
    margin: 0 3px;
    border-radius: 4px;
    background: #eef2fb;
    box-shadow: 0 0 1px #b5bdd0;
}

.app-active::after {
    content: "";
    position: absolute;
    bottom: 0;
    width: 16px;
    height: 3px;
    border-radius: 2px;
    background: #0a6cbf;
}

.task-search {
    display: flex;
    align-items: center;
    gap: 10px;
    width: 220px;
    height: 32px;
    margin: 0 2px;
    padding: 0 10px;
    border: 1px solid #d3daea;
    border-radius: 16px;
    background: #f5f9fe;
    font-size: 14px;
}

.tray {
    display: flex;
    align-items: center;
    justify-content: flex-end;
    padding-right: 20px;
}

.tray-more {
    margin-right: 20px;
}

.tray-cloud {
    margin-right: 16px;
}

.tray-net {
    gap: 8px;
}

.clock {
    display: flex;
    flex-direction: column;
    align-items: flex-end;
    margin: 0 8px 0 12px;
}

/* overlaid on the tray */
.watermark {
    position: absolute;
    right: 18px;
    bottom: 1px;
    display: flex;
    align-items: center;
    gap: 16px;
    color: #555;
    font-size: 18px;
    opacity: 0.7;
    pointer-events: none;
}

.watermark span {
    padding-bottom: 3px;
}

.book {
    width: 50px;
    height: 46px;
}
```
